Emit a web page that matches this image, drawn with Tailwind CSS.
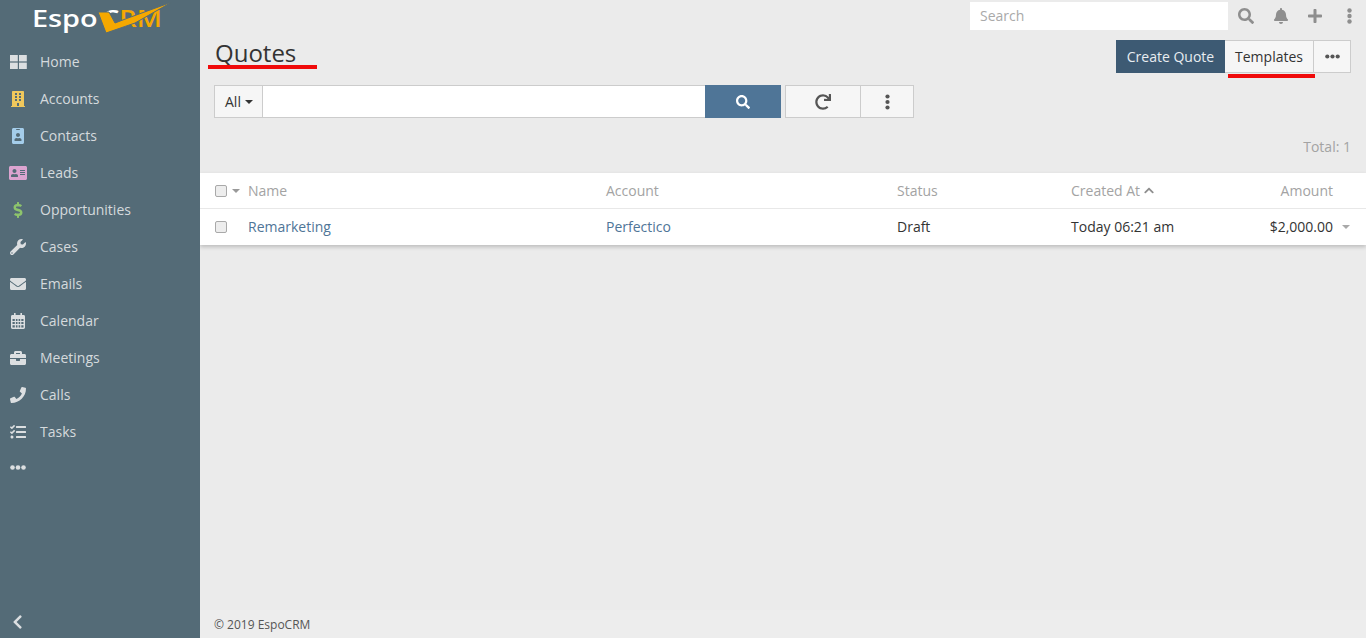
<!DOCTYPE html>
<html lang="en">
<head>
  <meta charset="utf-8"/>
  <title>Quotes</title>
  <script src="https://cdn.jsdelivr.net/npm/@tailwindcss/browser@4"></script>
</head>
<body class="bg-[#ebebeb] text-[#333] text-[14px] font-['Open_Sans',sans-serif]">
<div class="flex h-[638px] w-[1366px] overflow-hidden">

  <!-- Sidebar -->
  <aside class="w-[200px] shrink-0 bg-[#546b77] flex flex-col text-[#d5dadd] relative">
    <div class="h-[43px] pl-[32px] pt-[1px] flex items-start relative">
      <span class="w-[70px] origin-left scale-x-[1.2] font-semibold text-[24px] leading-[33px] text-white">Espo</span>
      <span class="origin-left scale-x-[1.14] font-semibold text-[24px] leading-[33px] text-[#f5a800]"><span class="text-white">C</span>RM</span>
      <svg class="absolute left-0 top-0" width="200" height="43" viewBox="0 0 200 43"><polygon fill="#f5a800" stroke="#546b77" stroke-width="1" points="98,12 106,33 135,23 172,2 128,18 115,23 109,12"/></svg>
    </div>
    <nav>
      <a class="h-[37px] flex items-center"><span class="w-[36px] flex justify-center"><svg width="17" height="14" viewBox="0 0 17 14" fill="#dcdfe1"><rect x="0" y="0" width="7.8" height="6.4"/><rect x="9" y="0" width="7.8" height="6.4"/><rect x="0" y="7.6" width="7.8" height="6.4"/><rect x="9" y="7.6" width="7.8" height="6.4"/></svg></span><span class="ml-[4px]">Home</span></a>
      <a class="h-[37px] flex items-center"><span class="w-[36px] flex justify-center"><svg width="14" height="16" viewBox="0 0 448 512" fill="#f0c85c"><path d="M436 480h-20V24c0-13.255-10.745-24-24-24H56C42.745 0 32 10.745 32 24v456H12c-6.627 0-12 5.373-12 12v20h448v-20c0-6.627-5.373-12-12-12zM128 76c0-6.627 5.373-12 12-12h40c6.627 0 12 5.373 12 12v40c0 6.627-5.373 12-12 12h-40c-6.627 0-12-5.373-12-12V76zm0 96c0-6.627 5.373-12 12-12h40c6.627 0 12 5.373 12 12v40c0 6.627-5.373 12-12 12h-40c-6.627 0-12-5.373-12-12v-40zm52 148h-40c-6.627 0-12-5.373-12-12v-40c0-6.627 5.373-12 12-12h40c6.627 0 12 5.373 12 12v40c0 6.627-5.373 12-12 12zm76 160h-64v-84c0-6.627 5.373-12 12-12h40c6.627 0 12 5.373 12 12v84zm64-172c0 6.627-5.373 12-12 12h-40c-6.627 0-12-5.373-12-12v-40c0-6.627 5.373-12 12-12h40c6.627 0 12 5.373 12 12v40zm0-96c0 6.627-5.373 12-12 12h-40c-6.627 0-12-5.373-12-12v-40c0-6.627 5.373-12 12-12h40c6.627 0 12 5.373 12 12v40zm0-96c0 6.627-5.373 12-12 12h-40c-6.627 0-12-5.373-12-12V76c0-6.627 5.373-12 12-12h40c6.627 0 12 5.373 12 12v40z"/></svg></span><span class="ml-[4px]">Accounts</span></a>
      <a class="h-[37px] flex items-center"><span class="w-[36px] flex justify-center"><svg width="12" height="16" viewBox="0 0 384 512" fill="#a4cdea"><path d="M336 0H48C21.5 0 0 21.5 0 48v416c0 26.5 21.5 48 48 48h288c26.5 0 48-21.5 48-48V48c0-26.5-21.5-48-48-48zM144 32h96c8.8 0 16 7.2 16 16s-7.2 16-16 16h-96c-8.8 0-16-7.2-16-16s7.2-16 16-16zm48 128c35.3 0 64 28.7 64 64s-28.7 64-64 64-64-28.7-64-64 28.7-64 64-64zm112 236.8c0 10.6-10 19.2-22.4 19.2H102.4C90 416 80 407.4 80 396.8v-19.2c0-31.8 30.1-57.6 67.2-57.6h5c12.3 5.1 25.7 8 39.8 8s27.6-2.9 39.8-8h5c37.1 0 67.2 25.8 67.2 57.6v19.2z"/></svg></span><span class="ml-[4px]">Contacts</span></a>
      <a class="h-[37px] flex items-center"><span class="w-[36px] flex justify-center"><svg width="18" height="16" viewBox="0 0 576 512" fill="#dca4d0"><path d="M528 32H48C21.5 32 0 53.5 0 80v352c0 26.5 21.5 48 48 48h480c26.5 0 48-21.5 48-48V80c0-26.5-21.5-48-48-48zm-352 96c35.3 0 64 28.7 64 64s-28.7 64-64 64-64-28.7-64-64 28.7-64 64-64zm112 236.8c0 10.6-10 19.2-22.4 19.2H86.4C76 384 64 375.4 64 364.8v-19.2c0-31.8 30.1-57.6 67.2-57.6h5c12.3 5.1 25.7 8 39.8 8s27.6-2.9 39.8-8h5c37.1 0 67.2 25.8 67.2 57.6v19.2zM512 312c0 4.4-3.6 8-8 8H360c-4.4 0-8-3.6-8-8v-16c0-4.4 3.6-8 8-8h144c4.4 0 8 3.6 8 8v16zm0-64c0 4.4-3.6 8-8 8H360c-4.4 0-8-3.6-8-8v-16c0-4.4 3.6-8 8-8h144c4.4 0 8 3.6 8 8v16zm0-64c0 4.4-3.6 8-8 8H360c-4.4 0-8-3.6-8-8v-16c0-4.4 3.6-8 8-8h144c4.4 0 8 3.6 8 8v16z"/></svg></span><span class="ml-[4px]">Leads</span></a>
      <a class="h-[37px] flex items-center"><span class="w-[36px] flex justify-center"><svg width="10" height="16" viewBox="0 0 288 512" fill="#8dc46c"><path d="M209.2 233.4l-108-31.6C88.7 198.2 80 186.5 80 173.5c0-16.3 13.2-29.5 29.5-29.5h66.3c12.2 0 24.2 3.7 34.2 10.5 6.1 4.1 14.3 3.1 19.5-2l34.8-34c7.1-6.9 6.1-18.4-1.8-24.5C238 74.8 207.4 64.1 176 64V16c0-8.8-7.2-16-16-16h-32c-8.8 0-16 7.2-16 16v48h-2.5C45.8 64-5.4 118.7.5 183.6c4.2 46.1 39.4 83.6 83.8 96.6l102.5 30c12.5 3.7 21.2 15.3 21.2 28.3 0 16.3-13.2 29.5-29.5 29.5h-66.3C100 368 88 364.3 78 357.5c-6.1-4.1-14.3-3.1-19.5 2l-34.8 34c-7.1 6.9-6.1 18.4 1.8 24.5 24.5 19.2 55.1 29.9 86.5 30v48c0 8.8 7.2 16 16 16h32c8.8 0 16-7.2 16-16v-48.2c46.6-.9 90.3-28.6 105.7-72.7 21.5-61.6-14.6-124.8-72.5-141.7z"/></svg></span><span class="ml-[4px]">Opportunities</span></a>
      <a class="h-[37px] flex items-center"><span class="w-[36px] flex justify-center"><svg width="16" height="16" viewBox="0 0 512 512" fill="#dcdfe1"><path d="M507.73 109.1c-2.24-9.03-13.54-12.09-20.12-5.51l-74.36 74.36-67.88-11.31-11.31-67.88 74.36-74.36c6.62-6.62 3.43-17.9-5.66-20.16-47.38-11.74-99.55.91-136.58 37.93-39.64 39.64-50.55 97.1-34.05 147.2L18.74 402.76c-24.99 24.99-24.99 65.51 0 90.5 24.99 24.99 65.51 24.99 90.5 0l213.21-213.21c50.12 16.71 107.47 5.68 147.37-34.22 37.07-37.07 49.7-89.32 37.91-136.73zM64 472c-13.25 0-24-10.75-24-24 0-13.26 10.75-24 24-24s24 10.74 24 24c0 13.25-10.75 24-24 24z"/></svg></span><span class="ml-[4px]">Cases</span></a>
      <a class="h-[37px] flex items-center"><span class="w-[36px] flex justify-center"><svg width="16" height="16" viewBox="0 0 512 512" fill="#dcdfe1"><path d="M502.3 190.8c3.9-3.1 9.7-.2 9.7 4.7V400c0 26.5-21.5 48-48 48H48c-26.5 0-48-21.5-48-48V195.6c0-5 5.7-7.8 9.7-4.7 22.4 17.4 52.1 39.5 154.1 113.6 21.1 15.4 56.7 47.8 92.2 47.6 35.7.3 72-32.8 92.3-47.6 102-74.1 131.6-96.3 154-113.7zM256 320c23.2.4 56.6-29.2 73.4-41.4 132.7-96.3 142.8-104.7 173.4-128.7 5.8-4.5 9.2-11.5 9.2-18.9v-19c0-26.5-21.5-48-48-48H48C21.5 64 0 85.5 0 112v19c0 7.4 3.4 14.3 9.2 18.9 30.6 23.9 40.7 32.4 173.4 128.7 16.8 12.2 50.2 41.8 73.4 41.4z"/></svg></span><span class="ml-[4px]">Emails</span></a>
      <a class="h-[37px] flex items-center"><span class="w-[36px] flex justify-center"><svg width="14" height="16" viewBox="0 0 14 16" fill="#dcdfe1"><path fill-rule="evenodd" d="M3 0h1.6v2h4.8V0H11v2h1.6c.8 0 1.4.6 1.4 1.4v11.2c0 .8-.6 1.4-1.4 1.4H1.4C.6 16 0 15.4 0 14.6V3.4C0 2.6.6 2 1.4 2H3zM1.5 6v2h2.3V6zm3.4 0v2h1.6V6zm2.7 0v2h1.6V6zm2.7 0v2h2.2V6zM1.5 9.1v2h2.3v-2zm3.4 0v2h1.6v-2zm2.7 0v2h1.6v-2zm2.7 0v2h2.2v-2zM1.5 12.2v2.2h2.3v-2.2zm3.4 0v2.2h1.6v-2.2zm2.7 0v2.2h1.6v-2.2zm2.7 0v2.2h2.2v-2.2z"/></svg></span><span class="ml-[4px]">Calendar</span></a>
      <a class="h-[37px] flex items-center"><span class="w-[36px] flex justify-center"><svg width="16" height="16" viewBox="0 0 512 512" fill="#dcdfe1"><path d="M320 336c0 8.84-7.16 16-16 16h-96c-8.84 0-16-7.16-16-16v-48H0v144c0 25.6 22.4 48 48 48h416c25.6 0 48-22.4 48-48V288H320v48zm144-208h-80V80c0-25.6-22.4-48-48-48H176c-25.6 0-48 22.4-48 48v48H48c-25.6 0-48 22.4-48 48v80h512v-80c0-25.6-22.4-48-48-48zm-144 0H192V96h128v32z"/></svg></span><span class="ml-[4px]">Meetings</span></a>
      <a class="h-[37px] flex items-center"><span class="w-[36px] flex justify-center"><svg width="16" height="16" viewBox="0 0 512 512" fill="#dcdfe1"><path d="M493.4 24.6l-104-24c-11.3-2.6-22.9 3.3-27.5 13.9l-48 112c-4.2 9.8-1.4 21.3 6.9 28l60.6 49.6c-36 76.7-98.9 140.5-177.2 177.2l-49.6-60.6c-6.8-8.3-18.2-11.1-28-6.9l-112 48C3.9 366.5-2 378.1.6 389.4l24 104C27.1 504.2 36.7 512 48 512c256.1 0 464-207.5 464-464 0-11.2-7.7-20.9-18.6-23.4z"/></svg></span><span class="ml-[4px]">Calls</span></a>
      <a class="h-[37px] flex items-center"><span class="w-[36px] flex justify-center"><svg width="16" height="16" viewBox="0 0 512 512" fill="#dcdfe1"><path d="M139.61 35.5a12 12 0 0 0-17 0L58.93 98.81l-22.7-22.12a12 12 0 0 0-17 0L3.53 92.41a12 12 0 0 0 0 17l47.59 47.4a12.78 12.78 0 0 0 17.61 0l15.59-15.62L156.52 69a12.09 12.09 0 0 0 .09-17zm0 159.19a12 12 0 0 0-17 0l-63.68 63.72-22.7-22.1a12 12 0 0 0-17 0L3.53 252a12 12 0 0 0 0 17L51 316.5a12.77 12.77 0 0 0 17.6 0l15.7-15.69 72.2-72.22a12 12 0 0 0 .09-16.9zM64 368c-26.49 0-48.59 21.5-48.59 48S37.53 464 64 464a48 48 0 0 0 0-96zm432 16H208a16 16 0 0 0-16 16v32a16 16 0 0 0 16 16h288a16 16 0 0 0 16-16v-32a16 16 0 0 0-16-16zm0-320H208a16 16 0 0 0-16 16v32a16 16 0 0 0 16 16h288a16 16 0 0 0 16-16V80a16 16 0 0 0-16-16zm0 160H208a16 16 0 0 0-16 16v32a16 16 0 0 0 16 16h288a16 16 0 0 0 16-16v-32a16 16 0 0 0-16-16z"/></svg></span><span class="ml-[4px]">Tasks</span></a>
      <a class="h-[35px] flex items-center"><span class="w-[36px] flex justify-center"><svg width="16" height="5" viewBox="0 0 16 5" fill="#dcdfe1"><circle cx="2.5" cy="2.5" r="2.3"/><circle cx="8" cy="2.5" r="2.3"/><circle cx="13.5" cy="2.5" r="2.3"/></svg></span></a>
    </nav>
    <div class="mt-auto h-[32px] pl-[12px] flex items-center">
      <svg width="11" height="16" viewBox="0 0 320 512" fill="#dcdfe1"><path d="M34.52 239.03L228.87 44.69c9.37-9.37 24.57-9.37 33.94 0l22.67 22.67c9.36 9.36 9.37 24.52.04 33.9L131.49 256l154.02 154.75c9.34 9.38 9.32 24.54-.04 33.9l-22.67 22.67c-9.37 9.37-24.57 9.37-33.94 0L34.52 272.97c-9.37-9.37-9.37-24.57 0-33.94z"/></svg>
    </div>
  </aside>

  <!-- Main column -->
  <main class="flex-1 flex flex-col min-w-0">
    <!-- Top bar -->
    <div class="h-[32px] pt-[2px] flex items-start">
      <div class="ml-[770px] w-[258px] h-[28px] bg-white px-[10px] text-[#a9a9a9] leading-[28px]">Search</div>
      <div class="w-[36px] h-[28px] flex items-center justify-center"><svg width="16" height="16" viewBox="0 0 512 512" fill="#8e8e8e"><path d="M505 442.7L405.3 343c-4.5-4.5-10.6-7-17-7H372c27.6-35.3 44-79.7 44-128C416 93.1 322.9 0 208 0S0 93.1 0 208s93.1 208 208 208c48.3 0 92.7-16.4 128-44v16.3c0 6.4 2.5 12.5 7 17l99.7 99.7c9.4 9.4 24.6 9.4 33.9 0l28.3-28.3c9.4-9.4 9.4-24.6.1-34zM208 336c-70.7 0-128-57.2-128-128 0-70.7 57.2-128 128-128 70.7 0 128 57.2 128 128 0 70.7-57.2 128-128 128z"/></svg></div>
      <div class="w-[34px] h-[28px] flex items-center justify-center"><svg width="14" height="16" viewBox="0 0 448 512" fill="#8e8e8e"><path d="M224 512c35.32 0 63.97-28.65 63.97-64H160.03c0 35.35 28.65 64 63.97 64zm215.39-149.71c-19.32-20.76-55.47-51.99-55.47-154.29 0-77.7-54.48-139.9-127.94-155.16V32c0-17.67-14.32-32-31.98-32s-31.98 14.33-31.98 32v20.84C118.56 68.1 64.08 130.3 64.08 208c0 102.3-36.15 133.53-55.47 154.29-6 6.45-8.66 14.16-8.61 21.71.11 16.4 12.98 32 32.1 32h383.8c19.12 0 32-15.6 32.1-32 .05-7.55-2.61-15.27-8.61-21.71z"/></svg></div>
      <div class="w-[34px] h-[28px] flex items-center justify-center"><svg width="14" height="16" viewBox="0 0 448 512" fill="#8e8e8e"><path d="M416 208H272V64c0-17.67-14.33-32-32-32h-32c-17.67 0-32 14.33-32 32v144H32c-17.67 0-32 14.33-32 32v32c0 17.67 14.33 32 32 32h144v144c0 17.67 14.33 32 32 32h32c17.67 0 32-14.33 32-32V304h144c17.67 0 32-14.33 32-32v-32c0-17.67-14.33-32-32-32z"/></svg></div>
      <div class="w-[34px] h-[28px] flex items-center justify-center"><svg width="5" height="16" viewBox="0 0 5 16" fill="#8e8e8e"><circle cx="2.5" cy="2.5" r="2.2"/><circle cx="2.5" cy="8" r="2.2"/><circle cx="2.5" cy="13.5" r="2.2"/></svg></div>
    </div>

    <!-- Header: title and actions -->
    <div class="h-[53px] pl-[15px] pr-[15px] flex items-start justify-between">
      <h3 class="relative text-[24px] leading-[33px] pt-[4px] text-[#333]">Quotes<span class="absolute left-[-7px] top-[33px] w-[109px] h-[4px] bg-[#f00a0a]"></span></h3>
      <div class="relative mt-[8px] flex h-[33px]">
        <div class="w-[109px] bg-[#3d5a73] text-[#e8edf1] flex items-center justify-center">Create Quote</div>
        <div class="w-[89px] bg-[#f6f6f6] border border-l-0 border-[#cccccc] flex items-center justify-center">Templates</div>
        <div class="w-[37px] bg-[#f6f6f6] border border-l-0 border-[#cccccc] flex items-center justify-center"><svg width="15" height="5" viewBox="0 0 15 5" fill="#555"><circle cx="2.3" cy="2.5" r="2.1"/><circle cx="7.5" cy="2.5" r="2.1"/><circle cx="12.7" cy="2.5" r="2.1"/></svg></div>
        <span class="absolute left-[112px] top-[34px] w-[87px] h-[4px] bg-[#f00a0a]"></span>
      </div>
    </div>

    <!-- Search row -->
    <div class="pl-[14px] flex h-[33px]">
      <div class="w-[49px] pl-[10px] bg-[#f6f6f6] border border-[#cccccc] flex items-center gap-[4px]">All<span class="w-0 h-0 border-x-[4px] border-x-transparent border-t-[4px] border-t-[#333] mt-[1px]"></span></div>
      <div class="w-[442px] bg-white border-y border-[#cccccc]"></div>
      <div class="w-[76px] bg-[#4f7597] flex items-center justify-center"><svg width="14" height="14" viewBox="0 0 512 512" fill="#fff"><path d="M505 442.7L405.3 343c-4.5-4.5-10.6-7-17-7H372c27.6-35.3 44-79.7 44-128C416 93.1 322.9 0 208 0S0 93.1 0 208s93.1 208 208 208c48.3 0 92.7-16.4 128-44v16.3c0 6.4 2.5 12.5 7 17l99.7 99.7c9.4 9.4 24.6 9.4 33.9 0l28.3-28.3c9.4-9.4 9.4-24.6.1-34zM208 336c-70.7 0-128-57.2-128-128 0-70.7 57.2-128 128-128 70.7 0 128 57.2 128 128 0 70.7-57.2 128-128 128z"/></svg></div>
      <div class="ml-[4px] w-[76px] bg-[#f6f6f6] border border-[#cccccc] flex items-center justify-center"><svg width="16" height="16" viewBox="0 0 512 512" fill="#555"><path d="M500.33 0h-47.41a12 12 0 0 0-12 12.57l4 82.76A247.42 247.42 0 0 0 256 8C119.34 8 7.9 119.53 8 256.19 8.1 393.07 119.1 504 256 504a247.1 247.1 0 0 0 166.18-63.91 12 12 0 0 0 .48-17.43l-34-34a12 12 0 0 0-16.38-.55A176 176 0 1 1 402.1 157.8l-101.53-4.87a12 12 0 0 0-12.57 12v47.41a12 12 0 0 0 12 12h200.33a12 12 0 0 0 12-12V12a12 12 0 0 0-12-12z"/></svg></div>
      <div class="w-[53px] bg-[#f6f6f6] border border-l-0 border-[#cccccc] flex items-center justify-center"><svg width="5" height="16" viewBox="0 0 5 16" fill="#555"><circle cx="2.5" cy="2.5" r="2.1"/><circle cx="2.5" cy="8" r="2.1"/><circle cx="2.5" cy="13.5" r="2.1"/></svg></div>
    </div>

    <!-- Total -->
    <div class="h-[55px] pr-[15px] pt-[19px] text-right text-[#a3a3a3] leading-[19px]">Total: 1</div>

    <!-- Table -->
    <div class="bg-white shadow-[0_2px_4px_rgba(0,0,0,0.2)]">
      <div class="h-[36px] border-b border-[#e8e8e8] grid grid-cols-[48px_358px_291px_174px_180px_1fr] items-center text-[#a3a3a3]">
        <div class="pl-[15px] flex items-center gap-[5px]"><span class="w-[12px] h-[12px] rounded-[2px] border border-[#a9a9a9] bg-[#ededed]"></span><span class="w-0 h-0 border-x-[4px] border-x-transparent border-t-[4px] border-t-[#999]"></span></div>
        <div>Name</div>
        <div>Account</div>
        <div>Status</div>
        <div class="flex items-center gap-[4px]">Created At<svg width="10" height="11" viewBox="0 0 448 512" fill="#8e8e8e"><path d="M240.971 130.524l194.343 194.343c9.373 9.373 9.373 24.569 0 33.941l-22.667 22.667c-9.357 9.357-24.522 9.375-33.901.04L224 227.495 69.255 381.516c-9.379 9.335-24.544 9.317-33.901-.04l-22.667-22.667c-9.373-9.373-9.373-24.569 0-33.941L207.03 130.525c9.372-9.373 24.568-9.373 33.941-.001z"/></svg></div>
        <div class="text-right pr-[33px]">Amount</div>
      </div>
      <div class="h-[36px] leading-[20px] grid grid-cols-[48px_358px_291px_174px_180px_1fr] items-center">
        <div class="pl-[15px] flex items-center"><span class="w-[12px] h-[12px] rounded-[2px] border border-[#a9a9a9] bg-[#ededed]"></span></div>
        <div class="text-[#4f7597]">Remarketing</div>
        <div class="text-[#4f7597]">Perfectico</div>
        <div>Draft</div>
        <div>Today 06:21 am</div>
        <div class="relative text-right pr-[33px]">$2,000.00<span class="absolute right-[16px] top-[8px] w-0 h-0 border-x-[4px] border-x-transparent border-t-[4px] border-t-[#a9a9a9]"></span></div>
      </div>
    </div>

    <!-- Footer -->
    <footer class="mt-auto h-[28px] bg-[#ededed] pl-[14px] pt-[6px] text-[12px] leading-[17px] text-[#555]">© 2019 EspoCRM</footer>
  </main>
</div>
</body>
</html>
